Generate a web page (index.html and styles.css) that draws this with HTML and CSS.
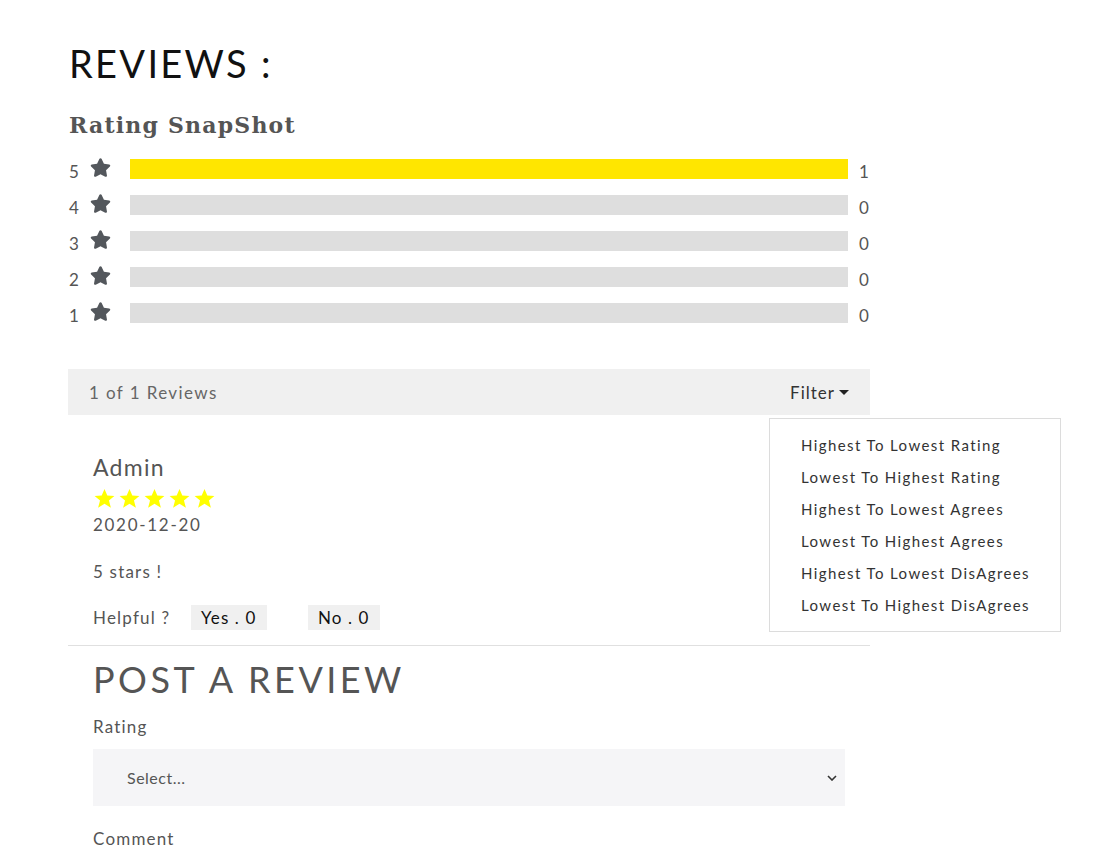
FILE: index.html
```html
<!DOCTYPE html>
<html>
<head>
<meta charset="utf-8">
<link rel="stylesheet" href="styles.css">
</head>
<body>
<div class="page">
  <h1 class="title">REVIEWS :</h1>
  <h2 class="snap-title">Rating SnapShot</h2>
  <div class="snapshot">
    <div class="row"><span class="num">5</span><svg class="gstar" viewBox="0 0 576 512"><path d="M259.3 17.8L194 150.2 47.9 171.5c-26.2 3.8-36.7 36.1-17.7 54.6l105.7 103-25 145.5c-4.5 26.3 23.2 46 46.4 33.7L288 439.6l130.7 68.7c23.2 12.2 50.9-7.4 46.4-33.7l-25-145.5 105.7-103c19-18.5 8.5-50.8-17.7-54.6L382 150.2 316.7 17.8c-11.7-23.6-45.6-23.9-57.4 0z"/></svg><div class="bar"><div class="fill" style="width:100%"></div></div><span class="count">1</span></div>
    <div class="row"><span class="num">4</span><svg class="gstar" viewBox="0 0 576 512"><path d="M259.3 17.8L194 150.2 47.9 171.5c-26.2 3.8-36.7 36.1-17.7 54.6l105.7 103-25 145.5c-4.5 26.3 23.2 46 46.4 33.7L288 439.6l130.7 68.7c23.2 12.2 50.9-7.4 46.4-33.7l-25-145.5 105.7-103c19-18.5 8.5-50.8-17.7-54.6L382 150.2 316.7 17.8c-11.7-23.6-45.6-23.9-57.4 0z"/></svg><div class="bar"></div><span class="count">0</span></div>
    <div class="row"><span class="num">3</span><svg class="gstar" viewBox="0 0 576 512"><path d="M259.3 17.8L194 150.2 47.9 171.5c-26.2 3.8-36.7 36.1-17.7 54.6l105.7 103-25 145.5c-4.5 26.3 23.2 46 46.4 33.7L288 439.6l130.7 68.7c23.2 12.2 50.9-7.4 46.4-33.7l-25-145.5 105.7-103c19-18.5 8.5-50.8-17.7-54.6L382 150.2 316.7 17.8c-11.7-23.6-45.6-23.9-57.4 0z"/></svg><div class="bar"></div><span class="count">0</span></div>
    <div class="row"><span class="num">2</span><svg class="gstar" viewBox="0 0 576 512"><path d="M259.3 17.8L194 150.2 47.9 171.5c-26.2 3.8-36.7 36.1-17.7 54.6l105.7 103-25 145.5c-4.5 26.3 23.2 46 46.4 33.7L288 439.6l130.7 68.7c23.2 12.2 50.9-7.4 46.4-33.7l-25-145.5 105.7-103c19-18.5 8.5-50.8-17.7-54.6L382 150.2 316.7 17.8c-11.7-23.6-45.6-23.9-57.4 0z"/></svg><div class="bar"></div><span class="count">0</span></div>
    <div class="row"><span class="num">1</span><svg class="gstar" viewBox="0 0 576 512"><path d="M259.3 17.8L194 150.2 47.9 171.5c-26.2 3.8-36.7 36.1-17.7 54.6l105.7 103-25 145.5c-4.5 26.3 23.2 46 46.4 33.7L288 439.6l130.7 68.7c23.2 12.2 50.9-7.4 46.4-33.7l-25-145.5 105.7-103c19-18.5 8.5-50.8-17.7-54.6L382 150.2 316.7 17.8c-11.7-23.6-45.6-23.9-57.4 0z"/></svg><div class="bar"></div><span class="count">0</span></div>
  </div>

  <div class="filterbar">
    <span class="total">1 of 1 Reviews</span>
    <span class="filter">Filter <span class="caret"></span></span>
    <ul class="menu">
      <li>Highest To Lowest Rating</li>
      <li>Lowest To Highest Rating</li>
      <li>Highest To Lowest Agrees</li>
      <li>Lowest To Highest Agrees</li>
      <li>Highest To Lowest DisAgrees</li>
      <li>Lowest To Highest DisAgrees</li>
    </ul>
  </div>

  <div class="review">
    <div class="author">Admin</div>
    <div class="ystars">
      <svg viewBox="0 0 24 24"><polygon points="12,1 15.2,8.6 23.3,9 17.1,14.3 19.3,22.5 12,18 4.7,22.5 6.9,14.3 0.7,9 8.8,8.6"/></svg>
      <svg viewBox="0 0 24 24"><polygon points="12,1 15.2,8.6 23.3,9 17.1,14.3 19.3,22.5 12,18 4.7,22.5 6.9,14.3 0.7,9 8.8,8.6"/></svg>
      <svg viewBox="0 0 24 24"><polygon points="12,1 15.2,8.6 23.3,9 17.1,14.3 19.3,22.5 12,18 4.7,22.5 6.9,14.3 0.7,9 8.8,8.6"/></svg>
      <svg viewBox="0 0 24 24"><polygon points="12,1 15.2,8.6 23.3,9 17.1,14.3 19.3,22.5 12,18 4.7,22.5 6.9,14.3 0.7,9 8.8,8.6"/></svg>
      <svg viewBox="0 0 24 24"><polygon points="12,1 15.2,8.6 23.3,9 17.1,14.3 19.3,22.5 12,18 4.7,22.5 6.9,14.3 0.7,9 8.8,8.6"/></svg>
    </div>
    <div class="date">2020-12-20</div>
    <p class="text">5 stars !</p>
    <div class="helpful">
      <span class="hlabel">Helpful ?</span>
      <span class="vote yes">Yes . 0</span>
      <span class="vote no">No . 0</span>
    </div>
  </div>

  <div class="post">
    <h2 class="post-title">POST A REVIEW</h2>
    <label class="lbl">Rating</label>
    <div class="select"><span>Select...</span><svg class="chev" viewBox="0 0 10 6"><path d="M1 1l4 4 4-4" fill="none" stroke="#333" stroke-width="1.6"/></svg></div>
    <label class="lbl comment">Comment</label>
  </div>
</div>
</body>
</html>
```

FILE: styles.css
```css
* { box-sizing: border-box; }
html, body { margin: 0; padding: 0; background: #fff; }
body { font-family: "Lato", "Nunito", "Open Sans", sans-serif; color: #555; overflow: hidden; height: 847px; }
.page { width: 802px; margin-left: 68px; padding-top: 41px; }
.title { margin: 0 0 0 1px; font-family: "Lato", sans-serif; font-weight: 400; font-size: 38px; line-height: 44px; letter-spacing: 2.3px; color: #111; }
.snap-title { margin: 25px 0 0 1px; font-family: "DejaVu Serif", serif; font-weight: 700; font-size: 22px; line-height: 30px; color: #555; letter-spacing: 1.2px; }
.snapshot { margin-top: 19px; display: flex; flex-direction: column; gap: 16px; }
.row { display: flex; align-items: center; height: 20px; position: relative; }
.num { width: 22px; padding-left: 1px; font-size: 17px; color: #555; line-height: 20px; margin-top: 6px; }
.gstar { width: 21px; height: 19px; fill: #53575c; margin-top: -3px; }
.bar { margin-left: 19px; width: 718px; height: 20px; background: #dedede; }
.fill { height: 100%; background: #ffe600; }
.count { margin-left: 11px; font-size: 17px; line-height: 20px; margin-top: 6px; color: #555; }
.filterbar { position: relative; margin-top: 46px; height: 46px; background: #f0f0f0; display: flex; align-items: center; justify-content: space-between; padding: 0 21px 0 21px; }
.total { font-size: 17px; color: #666; letter-spacing: 1.4px; }
.filter { font-size: 17px; color: #333; letter-spacing: 1px; display: flex; align-items: center; gap: 4px; }
.caret { width: 0; height: 0; border-left: 5px solid transparent; border-right: 5px solid transparent; border-top: 5px solid #222; margin-top: 1px; }
.menu { position: absolute; top: 49px; left: 701px; width: 292px; margin: 0; padding: 10px 0 10px 31px; list-style: none; background: #fff; border: 1px solid #dcdcdc; z-index: 2; }
.menu li { font-size: 15px; line-height: 32px; color: #333; letter-spacing: 1.4px; }
.review { padding: 37px 25px 15px; border-bottom: 1px solid #e0e0e0; }
.author { font-size: 23px; line-height: 30px; color: #555; letter-spacing: 1.3px; }
.ystars { display: flex; gap: 4px; margin-top: 5px; height: 22px; align-items: center; padding-left: 1px; }
.ystars svg { width: 21px; height: 21px; fill: #ffff00; }
.date { font-size: 17px; line-height: 24px; letter-spacing: 1.7px; color: #555; margin-top: 4px; }
.text { margin: 23px 0 0; font-size: 17px; line-height: 24px; letter-spacing: 1.2px; }
.helpful { margin-top: 21px; display: flex; align-items: center; height: 25px; }
.hlabel { font-size: 17px; letter-spacing: 1.2px; width: 98px; }
.vote { background: #f0f0f0; color: #111; font-size: 17px; line-height: 25px; height: 25px; padding: 0 10px; letter-spacing: 1.1px; }
.yes { width: 76px; }
.no { width: 72px; margin-left: 41px; }
.post { padding: 0 25px; }
.post-title { margin: 11px 0 0; font-weight: 400; font-size: 36px; line-height: 44px; letter-spacing: 3.5px; color: #555; }
.lbl { display: block; font-size: 17px; line-height: 24px; letter-spacing: 1.2px; margin-top: 14px; }
.select { margin-top: 10px; height: 57px; background: #f5f5f7; display: flex; align-items: center; justify-content: space-between; padding: 0 8px 0 34px; font-size: 16px; color: #555; letter-spacing: 0.5px; }
.chev { width: 10px; height: 6px; }
.lbl.comment { margin-top: 21px; }
```
